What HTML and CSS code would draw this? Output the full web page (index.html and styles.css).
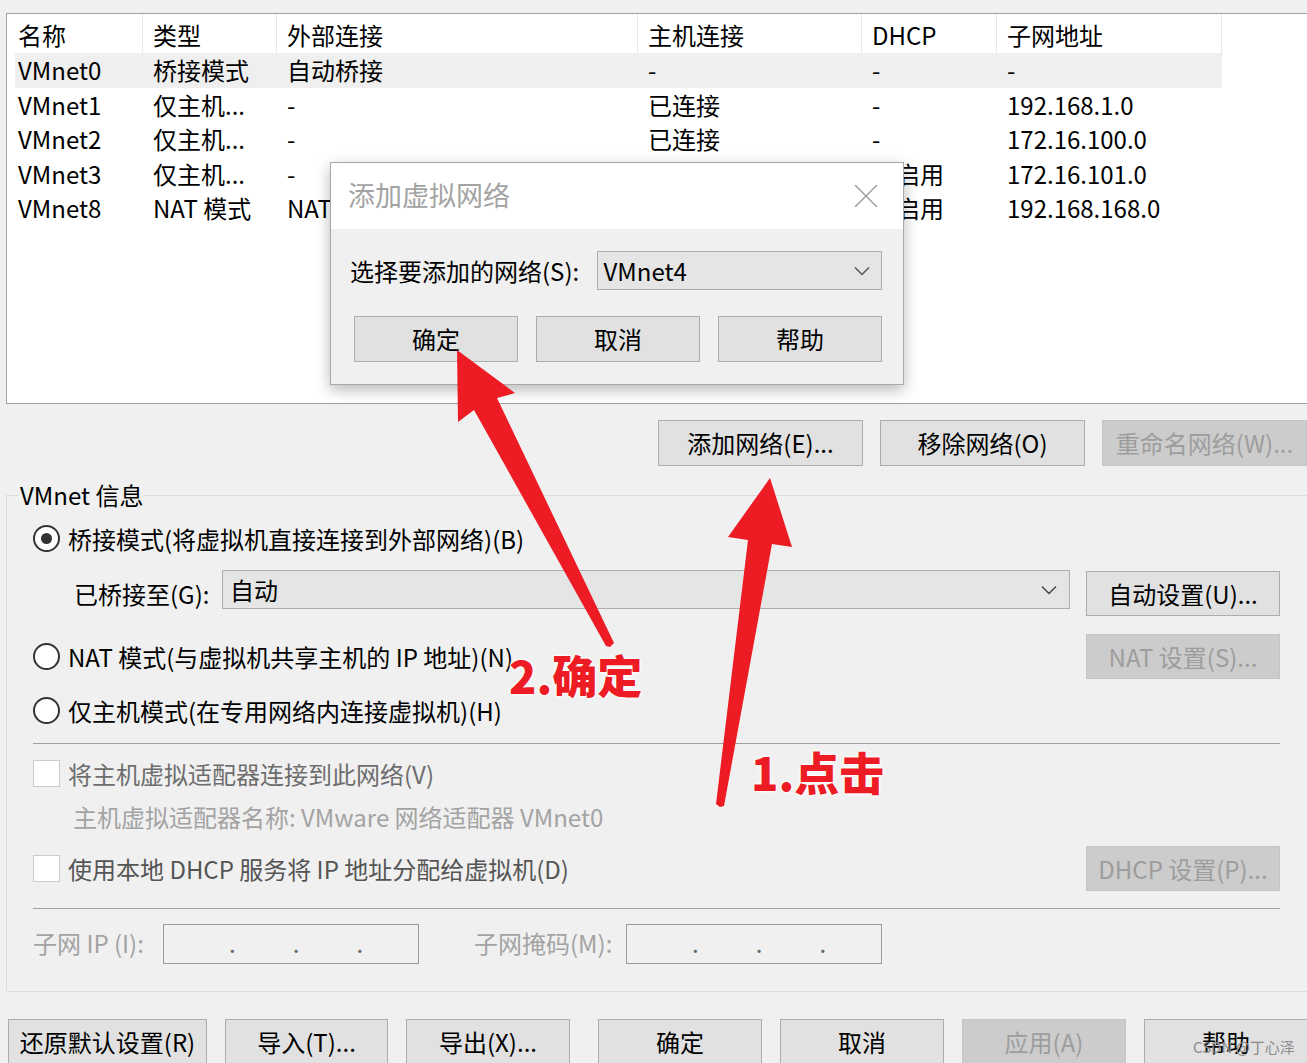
FILE: index.html
```html
<!DOCTYPE html>
<html lang="zh-CN">
<head>
<meta charset="utf-8">
<title>虚拟网络编辑器</title>
<link rel="stylesheet" href="styles.css">
</head>
<body>
<div class="list">
  <div class="grid head">
    <div class="c">名称</div><div class="c">类型</div><div class="c">外部连接</div><div class="c">主机连接</div><div class="c">DHCP</div><div class="c">子网地址</div>
  </div>
  <div class="grid row sel">
    <div class="c">VMnet0</div><div class="c">桥接模式</div><div class="c">自动桥接</div><div class="c">-</div><div class="c">-</div><div class="c">-</div>
  </div>
  <div class="grid row">
    <div class="c">VMnet1</div><div class="c">仅主机...</div><div class="c">-</div><div class="c">已连接</div><div class="c">-</div><div class="c">192.168.1.0</div>
  </div>
  <div class="grid row">
    <div class="c">VMnet2</div><div class="c">仅主机...</div><div class="c">-</div><div class="c">已连接</div><div class="c">-</div><div class="c">172.16.100.0</div>
  </div>
  <div class="grid row">
    <div class="c">VMnet3</div><div class="c">仅主机...</div><div class="c">-</div><div class="c">已连接</div><div class="c">已启用</div><div class="c">172.16.101.0</div>
  </div>
  <div class="grid row">
    <div class="c">VMnet8</div><div class="c">NAT 模式</div><div class="c">NAT</div><div class="c">已连接</div><div class="c">已启用</div><div class="c">192.168.168.0</div>
  </div>
</div>

<div class="tools">
  <div class="btn w205">添加网络(E)...</div>
  <div class="btn w205">移除网络(O)</div>
  <div class="btn w205 dis">重命名网络(W)...</div>
</div>

<fieldset class="gb">
  <legend>VMnet 信息</legend>
  <div class="gb-body">
    <div class="opt"><span class="radio on"></span>桥接模式(将虚拟机直接连接到外部网络)(B)</div>
    <div class="bridge">
      <div class="lbl">已桥接至(G):</div>
      <div class="combo"><span>自动</span>
        <svg class="chev" width="16" height="10" viewBox="0 0 16 10"><path d="M1 1.5 L8 8.5 L15 1.5" fill="none" stroke="#444" stroke-width="1.5"/></svg>
      </div>
      <div class="btn w194 up1">自动设置(U)...</div>
    </div>
    <div class="opt tall mt18"><span class="radio"></span>NAT 模式(与虚拟机共享主机的 IP 地址)(N)<div class="btn w194 dis right">NAT 设置(S)...</div></div>
    <div class="opt mt16"><span class="radio"></span>仅主机模式(在专用网络内连接虚拟机)(H)</div>
    <div class="sep mt14"></div>
    <div class="opt mt14 gray1"><span class="chk"></span>将主机虚拟适配器连接到此网络(V)</div>
    <div class="opt sub">主机虚拟适配器名称: VMware 网络适配器 VMnet0</div>
    <div class="opt tall mt11 gray2"><span class="chk"></span>使用本地 DHCP 服务将 IP 地址分配给虚拟机(D)<div class="btn w194 dis right">DHCP 设置(P)...</div></div>
    <div class="sep mt17"></div>
    <div class="subnet">
      <div class="slbl w130">子网 IP (I):</div>
      <div class="ipbox"><span>.</span><span>.</span><span>.</span></div>
      <div class="slbl w152 ml55">子网掩码(M):</div>
      <div class="ipbox"><span>.</span><span>.</span><span>.</span></div>
    </div>
  </div>
</fieldset>

<div class="foot">
  <div class="btn w199">还原默认设置(R)</div>
  <div class="btn w163">导入(T)...</div>
  <div class="btn w164">导出(X)...</div>
  <div class="btn w164 gapl">确定</div>
  <div class="btn w164">取消</div>
  <div class="btn w164 dis">应用(A)</div>
  <div class="btn w164">帮助</div>
</div>

<div class="dlg">
  <div class="dlg-title">
    <span>添加虚拟网络</span>
    <svg class="close" width="24" height="22" viewBox="0 0 24 22"><path d="M1 0 L23 22 M23 0 L1 22" stroke="#9a9a9a" stroke-width="1.4" fill="none"/></svg>
  </div>
  <div class="dlg-body">
    <div class="dlg-row">
      <div class="dlg-lbl">选择要添加的网络(S):</div>
      <div class="combo small"><span>VMnet4</span>
        <svg class="chev" width="16" height="10" viewBox="0 0 16 10"><path d="M1 1.5 L8 8.5 L15 1.5" fill="none" stroke="#555" stroke-width="1.5"/></svg>
      </div>
    </div>
    <div class="dlg-btns">
      <div class="btn w164">确定</div>
      <div class="btn w164">取消</div>
      <div class="btn w164">帮助</div>
    </div>
  </div>
</div>

<svg class="marks" width="1307" height="1063" viewBox="0 0 1307 1063">
  <polygon fill="#ed1c24" points="457,350 515,393 497,398 614,643 610,647 606,646 474,410 458,422"/>
  <polygon fill="#ed1c24" points="770,478 792,547 772,544 724,806 720,807 716,804 748,540 728,537"/>
</svg>
<div class="note n2">2.确定</div>
<div class="note n1">1.点击</div>
<div class="wm">CSDN @丁心泽</div>
</body>
</html>
```
FILE: styles.css
```css
* { box-sizing: border-box; }
html, body { margin: 0; padding: 0; }
body {
  width: 1307px;
  height: 1063px;
  overflow: hidden;
  position: relative;
  background: #f0f0f0;
  font-family: "Noto Sans CJK SC", "Noto Sans", sans-serif;
  font-size: 24px;
  color: #000;
}

/* list view */
.list {
  margin: 13px -40px 0 6px;
  height: 391px;
  border: 1px solid #9ea3ab;
  background: #fff;
  padding-left: 8px;
}
.grid {
  display: grid;
  grid-template-columns: 128px 134px 361px 224px 135px 225px;
  width: 1207px;
}
.c {
  padding-left: 10px;
  white-space: nowrap;
  overflow: hidden;
}
.c:first-child { padding-left: 3px; }
.head { height: 39px; }
.head .c {
  line-height: 39px;
  border-right: 1px solid #e8e8e8;
  padding-top: 1px;
}
.row { height: 34.5px; }
.row .c { line-height: 34.5px; }
.sel { background: #efefef; }

/* buttons */
.btn {
  height: 46px;
  border: 1px solid #adadad;
  background: #e1e1e1;
  color: #000;
  display: flex;
  align-items: center;
  justify-content: center;
  white-space: nowrap;
  flex: none;
  line-height: 1;
}
.btn.dis {
  background: #cccccc;
  border-color: #c4c4c4;
  color: #9d9d9d;
}
.w205 { width: 205px; }
.w194 { width: 194px; height: 45px; }
.w199 { width: 199px; }
.w163 { width: 163px; }
.w164 { width: 164px; }

.tools {
  display: flex;
  justify-content: flex-end;
  gap: 17px;
  margin-top: 16px;
}

/* group box */
.gb {
  margin: 14px -40px 0 6px;
  border: 1px solid #dcdcdc;
  padding: 0 0 27px 12px;
  min-width: 0;
}
.gb legend {
  padding: 0 1px;
  line-height: 30px;
  font-size: 24px;
}
.gb-body {
  width: 1261px;
  padding: 13px 0 0 14px;
}
.opt {
  display: flex;
  align-items: center;
  height: 34px;
  white-space: nowrap;
}
.opt:not(.tall) { padding-bottom: 3px; }
.opt.tall { height: 45px; }
.mt18 { margin-top: 18px; }
.mt16 { margin-top: 16px; }
.mt14 { margin-top: 14px; }
.mt11 { margin-top: 11px; }
.mt17 { margin-top: 17px; }
.right { margin-left: auto; }
.radio {
  width: 27px;
  height: 27px;
  border-radius: 50%;
  border: 2px solid #333;
  background: #fff;
  margin-right: 8px;
  flex: none;
  display: flex;
  align-items: center;
  justify-content: center;
}
.radio.on::after {
  content: "";
  width: 11px;
  height: 11px;
  border-radius: 50%;
  background: #333;
}
.chk {
  width: 27px;
  height: 27px;
  border: 1px solid #cccccc;
  background: #fff;
  margin-right: 8px;
  flex: none;
}
.gray1 { color: #6d6d6d; }
.gray2 { color: #555; }
.sub {
  margin-top: 9px;
  padding-left: 40px;
  color: #a3a3a3;
}
.bridge {
  display: flex;
  align-items: flex-start;
  margin-top: 13px;
}
.bridge .lbl {
  margin-left: 41px;
  width: 148px;
  line-height: 34px;
  margin-top: 7px;
  white-space: nowrap;
}
.combo {
  width: 848px;
  height: 39px;
  border: 1px solid #adadad;
  background: #e5e5e5;
  display: flex;
  align-items: center;
  padding-left: 7px;
  padding-right: 12px;
}
.combo .chev { margin-left: auto; }
.up1 { margin-top: 1px; margin-left: 16px; }
.sep { border-top: 1px solid #a0a0a0; height: 0; }

.subnet {
  display: flex;
  align-items: center;
  margin-top: 15px;
  height: 40px;
  color: #a3a3a3;
}
.slbl { white-space: nowrap; padding-bottom: 3px; }
.w130 { width: 130px; }
.w152 { width: 152px; }
.ml55 { margin-left: 55px; }
.ipbox {
  width: 256px;
  height: 40px;
  border: 1px solid #9a9a9a;
  display: flex;
  align-items: center;
  gap: 57px;
  padding-left: 65px;
  padding-bottom: 3px;
  color: #666;
}

/* bottom buttons */
.foot {
  display: flex;
  gap: 18px;
  margin-top: 27px;
  padding-left: 8px;
}
.gapl { margin-left: 10px; }

/* add network dialog */
.dlg {
  position: absolute;
  left: 330px;
  top: 162px;
  width: 574px;
  border: 1px solid #a8a8a8;
  background: #f0f0f0;
  box-shadow: 0 5px 14px rgba(0, 0, 0, 0.28);
}
.dlg-title {
  height: 66px;
  background: #fff;
  display: flex;
  align-items: center;
  padding-left: 17px;
  padding-right: 25px;
  padding-bottom: 3px;
  font-size: 27px;
  color: #a3a3a3;
}
.dlg-title .close { margin-left: auto; margin-top: 2px; }
.dlg-body { padding: 22px 21px 22px 19px; }
.dlg-row {
  display: flex;
  align-items: center;
  height: 39px;
}
.dlg-lbl { width: 247px; white-space: nowrap; }
.combo.small {
  width: 286px;
  padding-left: 6px;
  padding-right: 11px;
}
.dlg-btns {
  display: flex;
  gap: 18px;
  margin-top: 26px;
  margin-left: 4px;
}

/* annotations */
.marks {
  position: absolute;
  left: 0;
  top: 0;
  pointer-events: none;
}
.note {
  position: absolute;
  font-size: 45px;
  line-height: 45px;
  font-weight: 900;
  color: #ed1c24;
  white-space: nowrap;
  text-shadow: 0 0 2px #fff, 0 0 2px #fff, 0 0 3px #fff, 0 0 4px #fff;
}
.n2 { left: 509px; top: 652px; }
.n1 { left: 751px; top: 749px; }
.wm {
  position: absolute;
  left: 1193px;
  top: 1036px;
  font-size: 15px;
  color: #8c8c8c;
  white-space: nowrap;
}
```
